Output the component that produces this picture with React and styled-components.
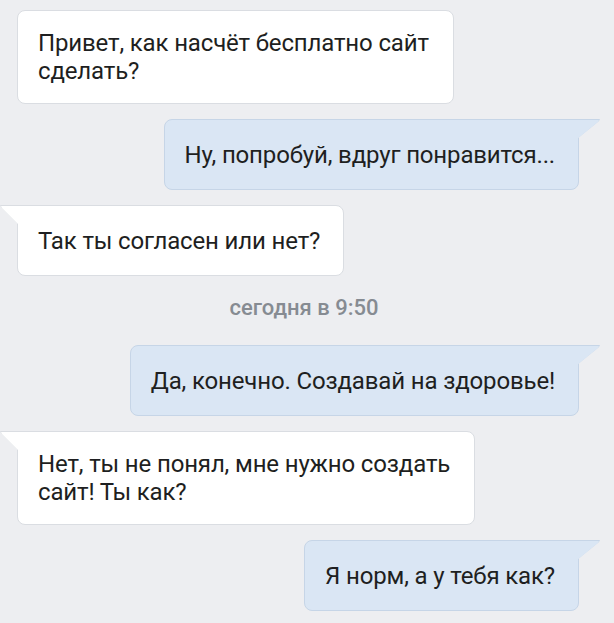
import React from "react";
import styled, { createGlobalStyle, css } from "styled-components";

const GlobalStyle = createGlobalStyle`
  html, body {
    margin: 0;
    padding: 0;
    background: #edeef1;
  }
  body {
    font-family: Roboto, "Noto Sans", "Liberation Sans", sans-serif;
    -webkit-font-smoothing: antialiased;
  }
`;

const Chat = styled.div`
  display: flex;
  flex-direction: column;
  gap: 15px;
  padding: 10px 35px 20px 17px;
  min-height: 623px;
  box-sizing: border-box;
`;

const Row = styled.div`
  display: flex;
  justify-content: ${(p) => (p.out ? "flex-end" : "flex-start")};
`;

const tailIn = css`
  border-top-left-radius: 0;
  &::before,
  &::after {
    content: "";
    position: absolute;
    top: -1px;
    width: 18px;
    height: 19px;
    clip-path: polygon(0 0, 100% 0, 100% 100%, 1px 2px);
  }
  &::before {
    left: -18px;
    background: #dadde2;
  }
  &::after {
    left: -17px;
    top: 0;
    background: #ffffff;
  }
`;

const tailOut = css`
  border-top-right-radius: 0;
  &::before,
  &::after {
    content: "";
    position: absolute;
    top: -1px;
    width: 22px;
    height: 19px;
    clip-path: polygon(0 0, 100% 0, calc(100% - 1px) 2px, 0 100%);
  }
  &::before {
    right: -22px;
    background: #c6d5e7;
  }
  &::after {
    right: -21px;
    top: 0;
    background: #dae6f4;
  }
`;

const Bubble = styled.div`
  position: relative;
  width: fit-content;
  padding: ${(p) => (p.multi ? "18px 24px 18px 20px" : "21px 23px 20px 20px")};
  font-size: 24px;
  line-height: 28px;
  letter-spacing: -0.15px;
  color: #1e1f21;
  border-radius: 8px;
  border: 1px solid ${(p) => (p.out ? "#c6d5e7" : "#dadde2")};
  background: ${(p) => (p.out ? "#dae6f4" : "#ffffff")};
  ${(p) => p.tail && (p.out ? tailOut : tailIn)}
`;

const Stamp = styled.div`
  text-align: center;
  margin: 4px 0 9px;
  padding-left: 12px;
  font-size: 22px;
  line-height: 26px;
  font-weight: 500;
  color: #868b92;
`;

const messages = [
  { out: false, tail: false, text: ["Привет, как насчёт бесплатно сайт", "сделать?"] },
  { out: true, tail: true, text: ["Ну, попробуй, вдруг понравится..."] },
  { out: false, tail: true, text: ["Так ты согласен или нет?"] },
  { stamp: "сегодня в 9:50" },
  { out: true, tail: true, text: ["Да, конечно. Создавай на здоровье!"] },
  { out: false, tail: true, text: ["Нет, ты не понял, мне нужно создать", "сайт! Ты как?"] },
  { out: true, tail: true, text: ["Я норм, а у тебя как?"] },
];

export default function App() {
  return (
    <>
      <GlobalStyle />
      <Chat>
        {messages.map((m, i) =>
          m.stamp ? (
            <Stamp key={i}>{m.stamp}</Stamp>
          ) : (
            <Row key={i} out={m.out ? 1 : 0}>
              <Bubble
                out={m.out ? 1 : 0}
                tail={m.tail ? 1 : 0}
                multi={m.text.length > 1 ? 1 : 0}
              >
                {m.text.map((line, j) => (
                  <React.Fragment key={j}>
                    {j > 0 && <br />}
                    {line}
                  </React.Fragment>
                ))}
              </Bubble>
            </Row>
          )
        )}
      </Chat>
    </>
  );
}
